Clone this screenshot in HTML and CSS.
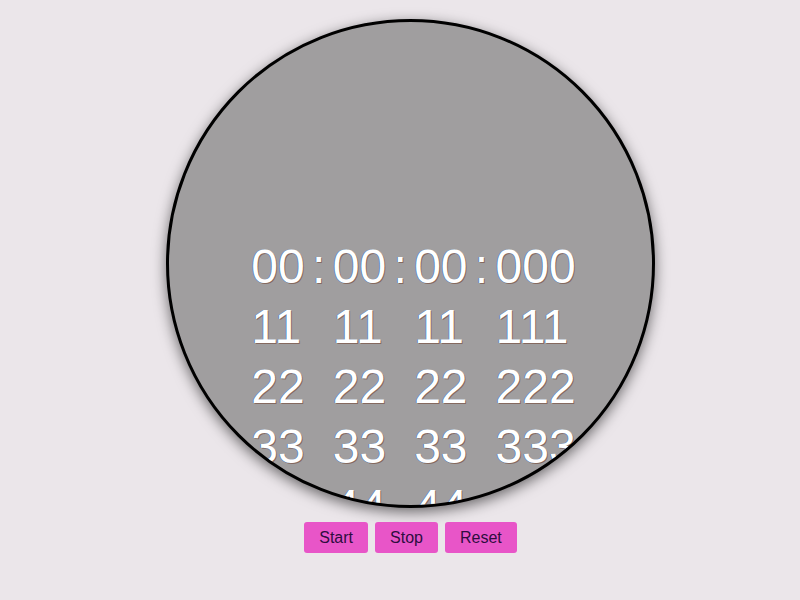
FILE: index.html
```html
<!DOCTYPE html>
<html>
<head>
<meta charset="utf-8">
<link rel="stylesheet" href="styles.css">
</head>
<body>
<div class="page">
  <div class="dial">
    <div class="clock">
      <div class="col"><span>00</span><span>11</span><span>22</span><span>33</span><span>44</span></div>
      <div class="sep"><span>:</span></div>
      <div class="col"><span>00</span><span>11</span><span>22</span><span>33</span><span>44</span></div>
      <div class="sep"><span>:</span></div>
      <div class="col"><span>00</span><span>11</span><span>22</span><span>33</span><span>44</span></div>
      <div class="sep"><span>:</span></div>
      <div class="col"><span>000</span><span>111</span><span>222</span><span>333</span><span>444</span></div>
    </div>
  </div>
  <div class="controls">
    <button class="btn">Start</button>
    <button class="btn">Stop</button>
    <button class="btn">Reset</button>
  </div>
</div>
</body>
</html>
```
FILE: styles.css
```css
html, body {
  margin: 0;
  padding: 0;
  background: #ebe6ea;
  font-family: "Liberation Sans", Arial, sans-serif;
}
.page {
  display: flex;
  flex-direction: column;
  align-items: center;
  padding-top: 19px;
  padding-left: 21px;
}
.dial {
  width: 483px;
  height: 483px;
  border: 3px solid #000;
  border-radius: 50%;
  background: #a09e9f;
  overflow: hidden;
  box-shadow: 0 4px 14px rgba(0, 0, 0, 0.55);
  display: flex;
  justify-content: center;
}
.clock {
  display: flex;
  padding-top: 215px;
  padding-left: 6px;
  font-size: 48px;
  line-height: 60px;
  color: #fff;
  text-shadow: -1px 0 rgba(40, 110, 190, 0.55), 1px 1px rgba(110, 60, 40, 0.55);
}
.col {
  display: flex;
  flex-direction: column;
}
.sep {
  width: 28px;
  text-align: center;
}
.controls {
  display: flex;
  gap: 7px;
  margin-top: 14px;
}
.btn {
  font-family: "Liberation Sans", Arial, sans-serif;
  font-size: 16px;
  line-height: 19px;
  padding: 6px 15px;
  border: none;
  border-radius: 3px;
  background: #e855c8;
  color: #2e0d40;
}
```
